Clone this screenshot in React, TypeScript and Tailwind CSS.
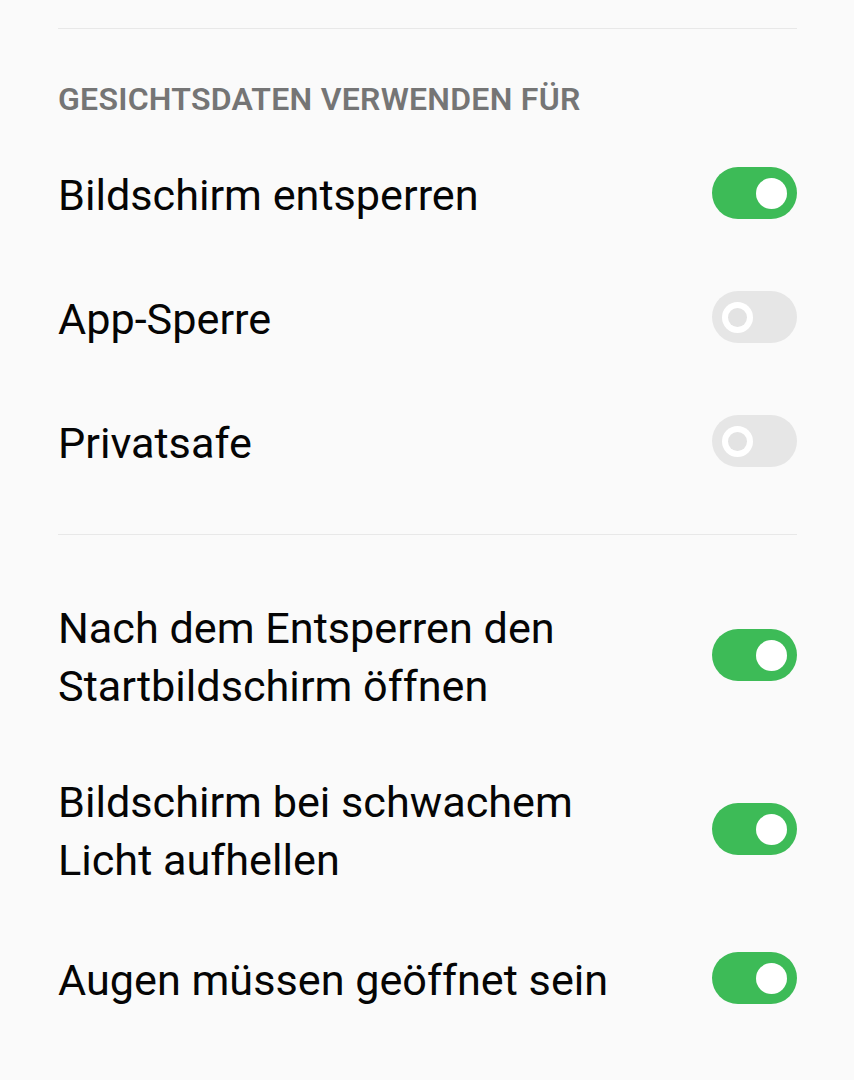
import { useState } from "react";

type Item = { label: string[]; on: boolean; tall?: boolean };

const Toggle = ({ on, onClick }: { on: boolean; onClick: () => void }) => (
  <button
    onClick={onClick}
    className={`mb-[6px] flex h-[52px] w-[85px] shrink-0 items-center rounded-full px-[10px] ${
      on ? "justify-end bg-[#3dbb57]" : "justify-start bg-[#e6e6e6]"
    }`}
  >
    <span className="flex h-[31px] w-[31px] items-center justify-center rounded-full bg-white">
      {!on && <span className="h-[19px] w-[19px] rounded-full bg-[#e3e3e3]" />}
    </span>
  </button>
);

export default function App() {
  const [first, setFirst] = useState<Item[]>([
    { label: ["Bildschirm entsperren"], on: true },
    { label: ["App-Sperre"], on: false },
    { label: ["Privatsafe"], on: false },
  ]);
  const [second, setSecond] = useState<Item[]>([
    { label: ["Nach dem Entsperren den", "Startbildschirm öffnen"], on: true, tall: true },
    { label: ["Bildschirm bei schwachem", "Licht aufhellen"], on: true, tall: true },
    { label: ["Augen müssen geöffnet sein"], on: true },
  ]);

  const flip = (list: Item[], i: number) => list.map((it, j) => (j === i ? { ...it, on: !it.on } : it));

  const row = (it: Item, onClick: () => void) => (
    <div
      key={it.label[0]}
      className={`flex items-center justify-between ${it.tall ? "h-[174px]" : "h-[124px]"}`}
    >
      <div className="text-[43.2px] leading-[58px] text-[#050505]">
        {it.label.map((l) => (
          <div key={l}>{l}</div>
        ))}
      </div>
      <Toggle on={it.on} onClick={onClick} />
    </div>
  );

  return (
    <div className="min-h-screen bg-[#fafafa] pl-[58px] pr-[57px] font-['Roboto',sans-serif]">
      <div className="pt-[28px]">
        <div className="h-px bg-[#e8e8e8]" />
      </div>

      {/* Gesichtsdaten */}
      <h2 className="mt-[50px] text-[32px] font-semibold leading-[40px] tracking-[0.27px] text-[#757575]">
        GESICHTSDATEN VERWENDEN FÜR
      </h2>
      <div className="mt-[15px]">
        {first.map((it, i) => row(it, () => setFirst(flip(first, i))))}
      </div>

      <div className="mt-[28px] h-px bg-[#e8e8e8]" />

      <div className="mt-[36px]">
        {second.map((it, i) => row(it, () => setSecond(flip(second, i))))}
      </div>
    </div>
  );
}
